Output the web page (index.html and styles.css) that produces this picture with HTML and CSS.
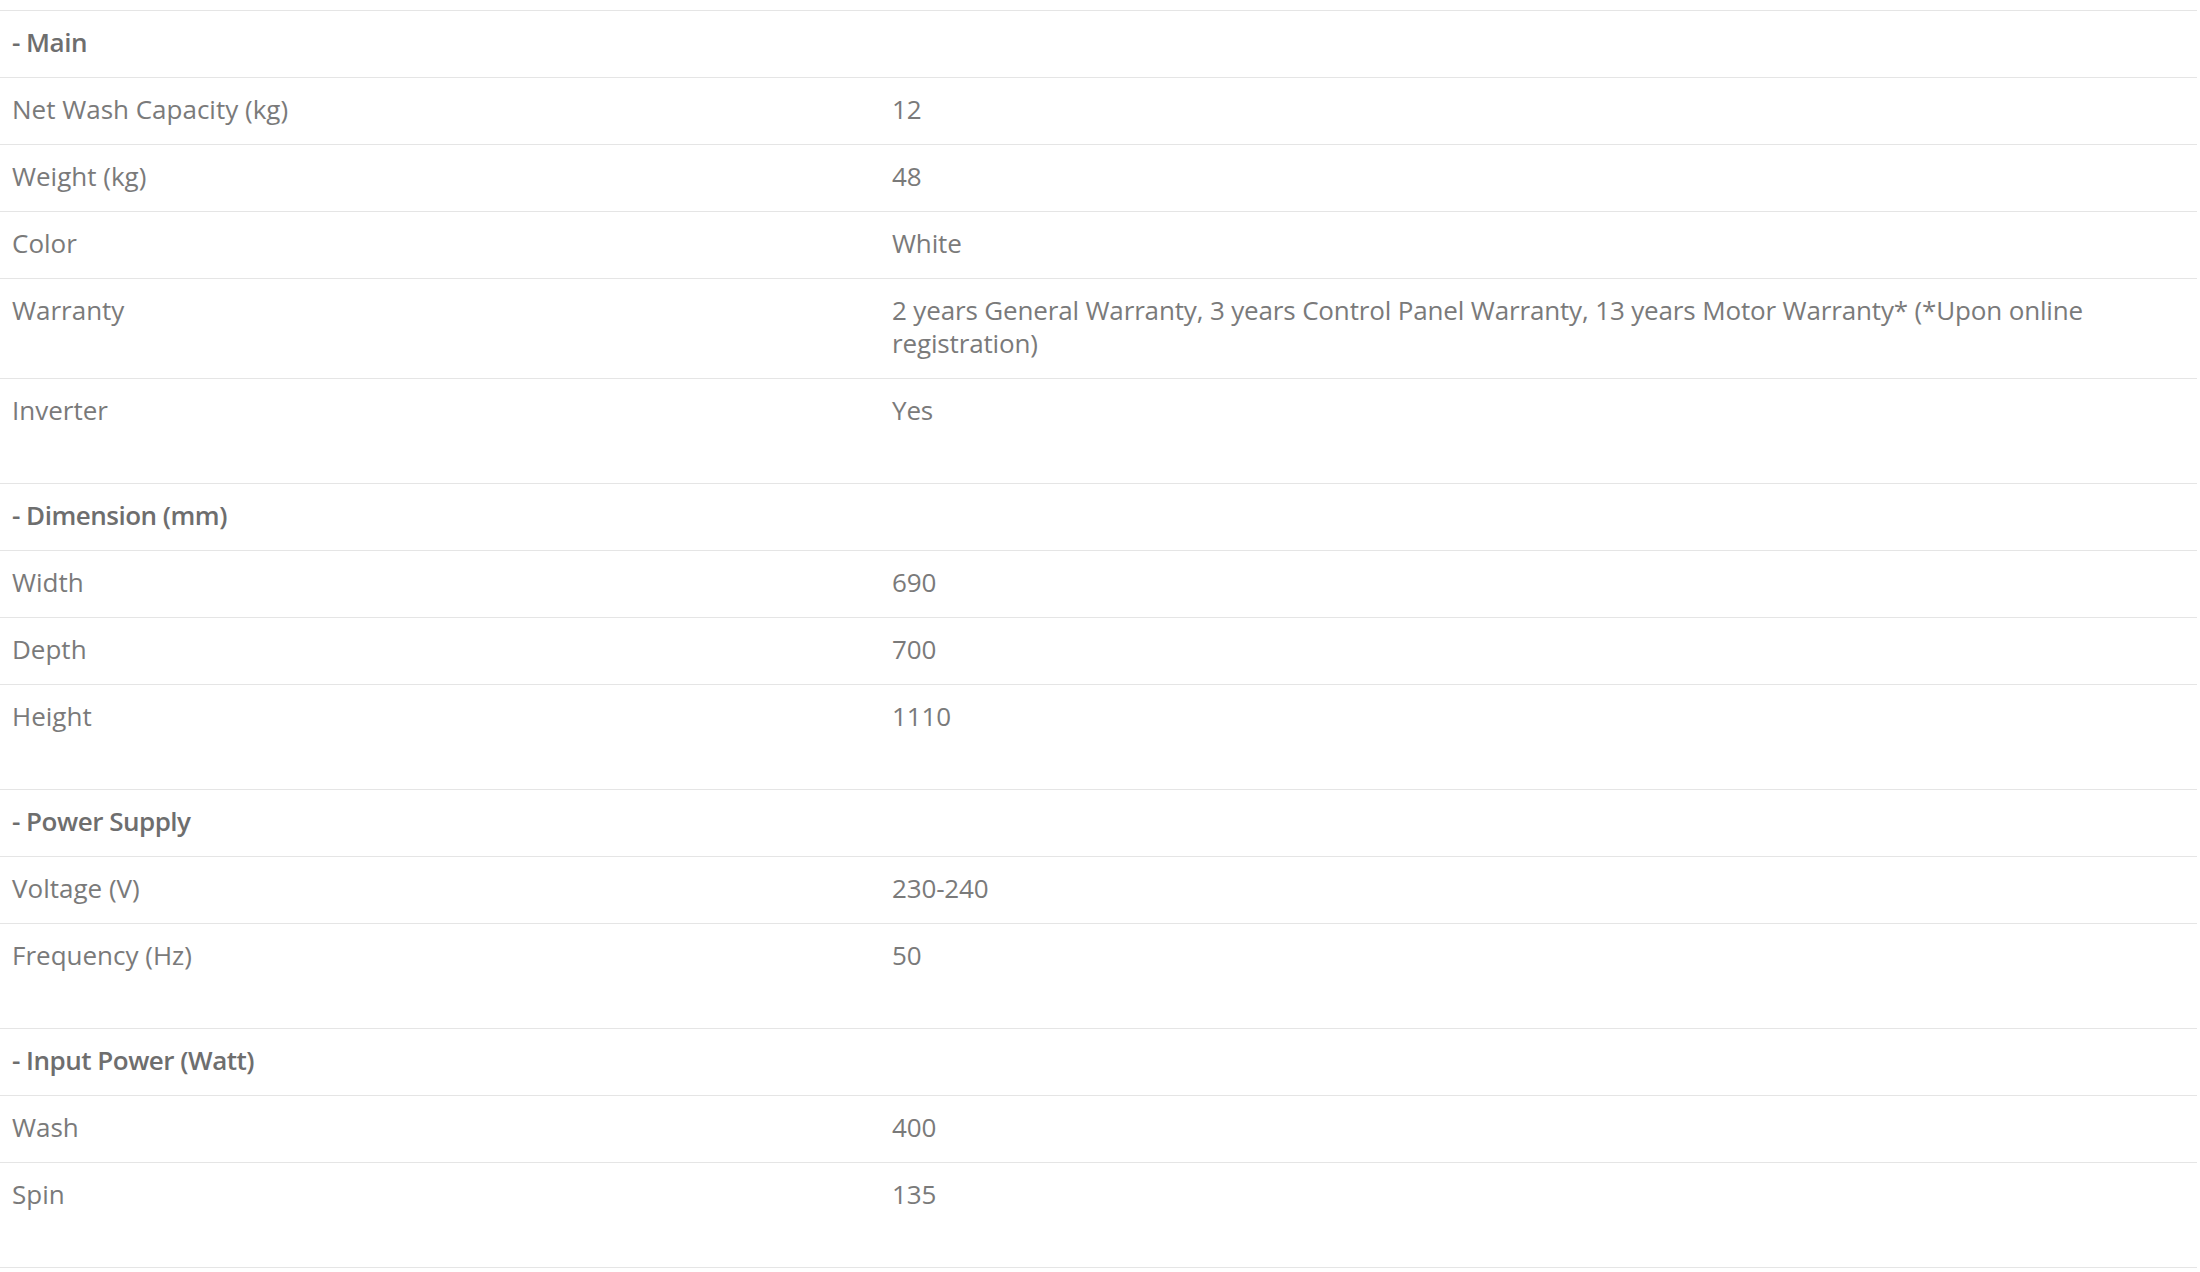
FILE: index.html
```html
<!DOCTYPE html>
<html lang="en">
<head>
<meta charset="utf-8">
<title>Specifications</title>
<link rel="stylesheet" href="styles.css">
</head>
<body>
<div class="specs">
  <div class="row head"><div class="cell">- Main</div></div>
  <div class="row"><div class="cell">Net Wash Capacity (kg)</div><div class="cell">12</div></div>
  <div class="row"><div class="cell">Weight (kg)</div><div class="cell">48</div></div>
  <div class="row"><div class="cell">Color</div><div class="cell">White</div></div>
  <div class="row"><div class="cell">Warranty</div><div class="cell">2 years General Warranty, 3 years Control Panel Warranty, 13 years Motor Warranty* (*Upon online registration)</div></div>
  <div class="row last"><div class="cell">Inverter</div><div class="cell">Yes</div></div>

  <div class="row head"><div class="cell">- Dimension (mm)</div></div>
  <div class="row"><div class="cell">Width</div><div class="cell">690</div></div>
  <div class="row"><div class="cell">Depth</div><div class="cell">700</div></div>
  <div class="row last"><div class="cell">Height</div><div class="cell">1110</div></div>

  <div class="row head"><div class="cell">- Power Supply</div></div>
  <div class="row"><div class="cell">Voltage (V)</div><div class="cell">230-240</div></div>
  <div class="row last"><div class="cell">Frequency (Hz)</div><div class="cell">50</div></div>

  <div class="row head"><div class="cell">- Input Power (Watt)</div></div>
  <div class="row"><div class="cell">Wash</div><div class="cell">400</div></div>
  <div class="row last"><div class="cell">Spin</div><div class="cell">135</div></div>
</div>
</body>
</html>
```
FILE: styles.css
```css
html, body {
  margin: 0;
  padding: 0;
  background: #ffffff;
}

body {
  padding: 10px 3px 0 0;
  font-family: "Open Sans", "Noto Sans", sans-serif;
  font-size: 26px;
  line-height: 33px;
  color: #7a7a7a;
}

.specs {
  border-bottom: 1px solid #e5e5e5;
}

.row {
  display: grid;
  grid-template-columns: 880px 1fr;
  border-top: 1px solid #e5e5e5;
}

.cell {
  padding: 15px 11px 18px 12px;
}

.row .cell:last-child {
  padding-right: 16px;
  letter-spacing: -0.15px;
}

.row.last .cell {
  padding-bottom: 56px;
}

.row.head {
  grid-template-columns: 1fr;
}

.row.head .cell {
  font-weight: 600;
  color: #6e6e6e;
  letter-spacing: -0.5px;
}
```
